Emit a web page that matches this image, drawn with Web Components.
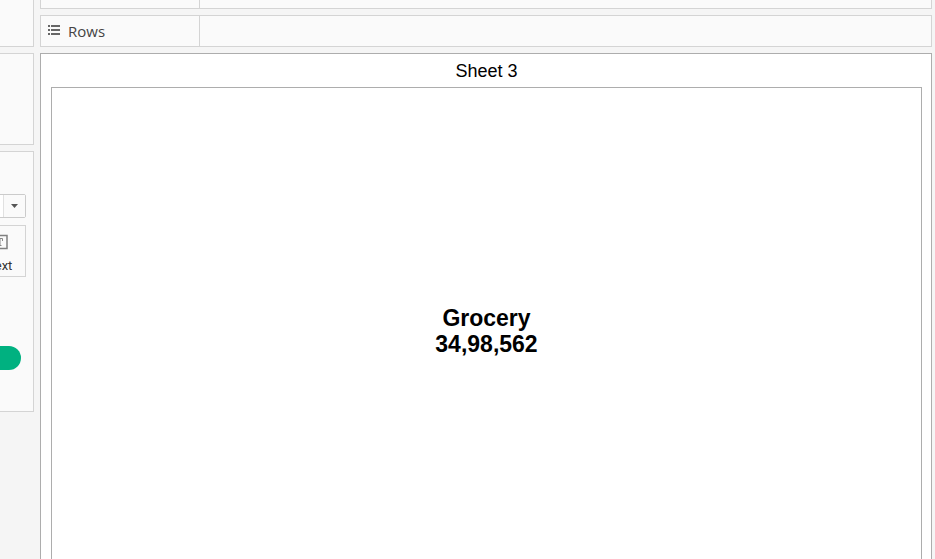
<!DOCTYPE html>
<html lang="en">
<head>
<meta charset="utf-8">
<title>Sheet 3</title>
<style>
html,body{margin:0;height:100%;overflow:hidden;background:#f5f5f5;font-family:"Liberation Sans",Arial,sans-serif;color:#000}
</style>
</head>
<body>
<viz-workspace></viz-workspace>
<script>
const define = (name, html) => {
  const t = document.createElement('template');
  t.innerHTML = '<style>*{box-sizing:border-box}:host{box-sizing:border-box}</style>' + html;
  customElements.define(name, class extends HTMLElement {
    constructor() {
      super();
      this.attachShadow({ mode: 'open' }).append(t.content.cloneNode(true));
    }
  });
};

define('side-card', `
<style>
:host{display:flex;flex-direction:column;align-items:flex-end;overflow:hidden;background:#fafafa;border:1px solid #d4d4d4;border-left:0;border-top-width:var(--card-top,1px)}
</style><slot></slot>`);

define('mark-type', `
<style>
:host{display:block;flex:none}
button{display:flex;width:160px;height:24px;margin:0;padding:0;justify-content:flex-end;background:#fff;border:1px solid #cbcbcb;border-radius:2px}
span{display:flex;width:22px;height:100%;align-items:center;justify-content:center;border-left:1px solid #e1e1e1;background:#fafafa}
</style>
<button type="button" aria-label="Mark type"><span><svg width="7" height="4" viewBox="0 0 7 4"><path d="M0 0h7L3.5 4z" fill="#555"/></svg></span></button>`);

define('mark-button', `
<style>
:host{display:block;flex:none}
button{display:flex;flex-direction:column;align-items:center;justify-content:space-between;width:52px;height:52px;margin:0;padding:8px 0 0;background:#fafafa;border:1px solid #d4d4d4;font:13px/20px Roboto,"Noto Sans",sans-serif;color:#333}
svg{display:block}
</style>
<button type="button"><svg width="16" height="16" viewBox="0 0 16 16" fill="none"><path d="M1 1.5h14v13H1z" stroke="#808080" stroke-width="1.5"/><path d="M5.5 7V4.5h5V7M8 4.5v7M6.5 11.5h3" stroke="#888"/></svg><slot></slot></button>`);

define('field-pill', `
<style>:host{display:block;flex:none;width:160px;height:24px;border-radius:12px;background:#00b180}</style>`);

define('shelf-bar', `
<style>
:host{display:flex;background:#fafafa;border:1px solid #d4d4d4}
.label{display:flex;align-items:center;gap:8px;width:159px;padding-left:7px;border-right:1px solid #d4d4d4;font:15px/20px "Open Sans","Noto Sans",sans-serif;color:#444}
.drop{flex:1}
</style>
<div class="label"><slot name="icon"></slot><slot></slot></div><div class="drop"></div>`);

define('work-sheet', `
<style>
:host{display:flex;flex-direction:column;background:#fff;border:1px solid #adadad;padding:7px 10px 9px 10px}
h1{margin:0 0 6px;font-size:18px;line-height:20px;font-weight:400;text-align:center}
.view{flex:1;display:flex;align-items:center;justify-content:center;border:1px solid #adadad;text-align:center;font-size:23px;line-height:26px;font-weight:700}
</style>
<h1><slot name="title"></slot></h1><div class="view"><slot></slot></div>`);

define('viz-workspace', `
<style>
:host{display:grid;grid-template-columns:34px minmax(0,1fr);gap:6px;padding-right:3px;height:calc(100vh + 26px)}
aside,main{display:flex;flex-direction:column;gap:6px;min-width:0}
.pages{height:47px;--card-top:0}
.filters{height:92px}
.marks{height:261px;padding:42px 7px 0 0}
.marks mark-button{margin-top:7px}
.marks field-pill{margin:69px 5px 0 0}
.cols{height:9px;border-top:0}
.rows{height:32px}
.rows svg{margin-top:-3px}
work-sheet{flex:1;padding-right:9px}
</style>
<aside>
<side-card class="pages"></side-card>
<side-card class="filters"></side-card>
<side-card class="marks"><mark-type></mark-type><mark-button>Text</mark-button><field-pill></field-pill></side-card>
</aside>
<main>
<shelf-bar class="cols"></shelf-bar>
<shelf-bar class="rows"><svg slot="icon" width="12" height="10" viewBox="0 0 12 10" fill="#666" shape-rendering="crispEdges"><path d="M0 0h2v2H0zM3 0h9v2H3zM0 4h2v2H0zM3 4h9v2H3zM0 8h2v2H0zM3 8h9v2H3z"/></svg>Rows</shelf-bar>
<work-sheet><span slot="title">Sheet 3</span><div>Grocery<br>34,98,562</div></work-sheet>
</main>`);
</script>
</body>
</html>
